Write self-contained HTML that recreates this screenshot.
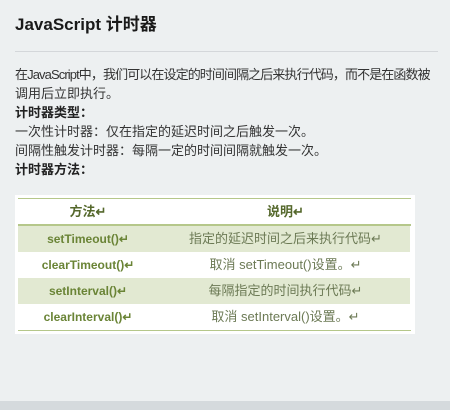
<!DOCTYPE html>
<html><head><meta charset="utf-8"><style>
body{margin:0;width:450px;height:410px;background:#edf0f1;font-family:"Liberation Sans","Noto Sans CJK SC",sans-serif;color:#222;position:relative;overflow:hidden}
h1{position:absolute;left:15px;top:13px;margin:0;font-size:17px;font-weight:bold;color:#1a1a1a;line-height:24px}
.hr{position:absolute;left:15px;top:51px;width:423px;height:1px;background:#d4d7da}
.t{position:absolute;left:15px;top:65px;width:435px;font-size:13px;line-height:19px;color:#333;white-space:nowrap}
.t b{color:#222}
.tbl{position:absolute;left:15px;top:195px;width:400px;height:139px;background:#fff}
.row{position:absolute;left:3px;width:392px;height:26px;font-size:12px;line-height:26px}
.g{background:#e2e9d2}
.c1{position:absolute;left:0;width:140px;text-align:center;color:#6a8436;font-weight:bold}
.c2{position:absolute;left:145px;width:245px;text-align:center;color:#6c7a55;font-size:13px}
.ln{position:absolute;left:3px;width:393px;height:2px;background:#b5c78a}
.bot{position:absolute;left:0;top:401px;width:450px;height:9px;background:#d5dadd}
</style></head><body>
<h1>JavaScript 计时器</h1>
<div class="hr"></div>
<div class="t"><span style="letter-spacing:-0.9px">在JavaScript中，我们可以在设定的时间间隔之后来执行代码，而不是在函数被</span><br>调用后立即执行。<br><b>计时器类型：</b><br>一次性计时器：仅在指定的延迟时间之后触发一次。<br>间隔性触发计时器：每隔一定的时间间隔就触发一次。<br><b>计时器方法：</b></div>
<div class="tbl">
<div class="ln" style="top:3px;height:1px"></div>
<div class="row" style="top:4px;font-size:13px"><span class="c1" style="color:#55682c">方法↵</span><span class="c2" style="color:#55682c;font-weight:bold">说明↵</span></div>
<div class="ln" style="top:29px"></div>
<div class="row g" style="top:31px"><span class="c1">setTimeout()↵</span><span class="c2">指定的延迟时间之后来执行代码↵</span></div>
<div class="row" style="top:57px"><span class="c1">clearTimeout()↵</span><span class="c2">取消 setTimeout()设置。↵</span></div>
<div class="row g" style="top:83px"><span class="c1">setInterval()↵</span><span class="c2">每隔指定的时间执行代码↵</span></div>
<div class="row" style="top:109px"><span class="c1">clearInterval()↵</span><span class="c2">取消 setInterval()设置。↵</span></div>
<div class="ln" style="top:135px;height:1px"></div>
</div>
<div class="bot"></div>
</body></html>
